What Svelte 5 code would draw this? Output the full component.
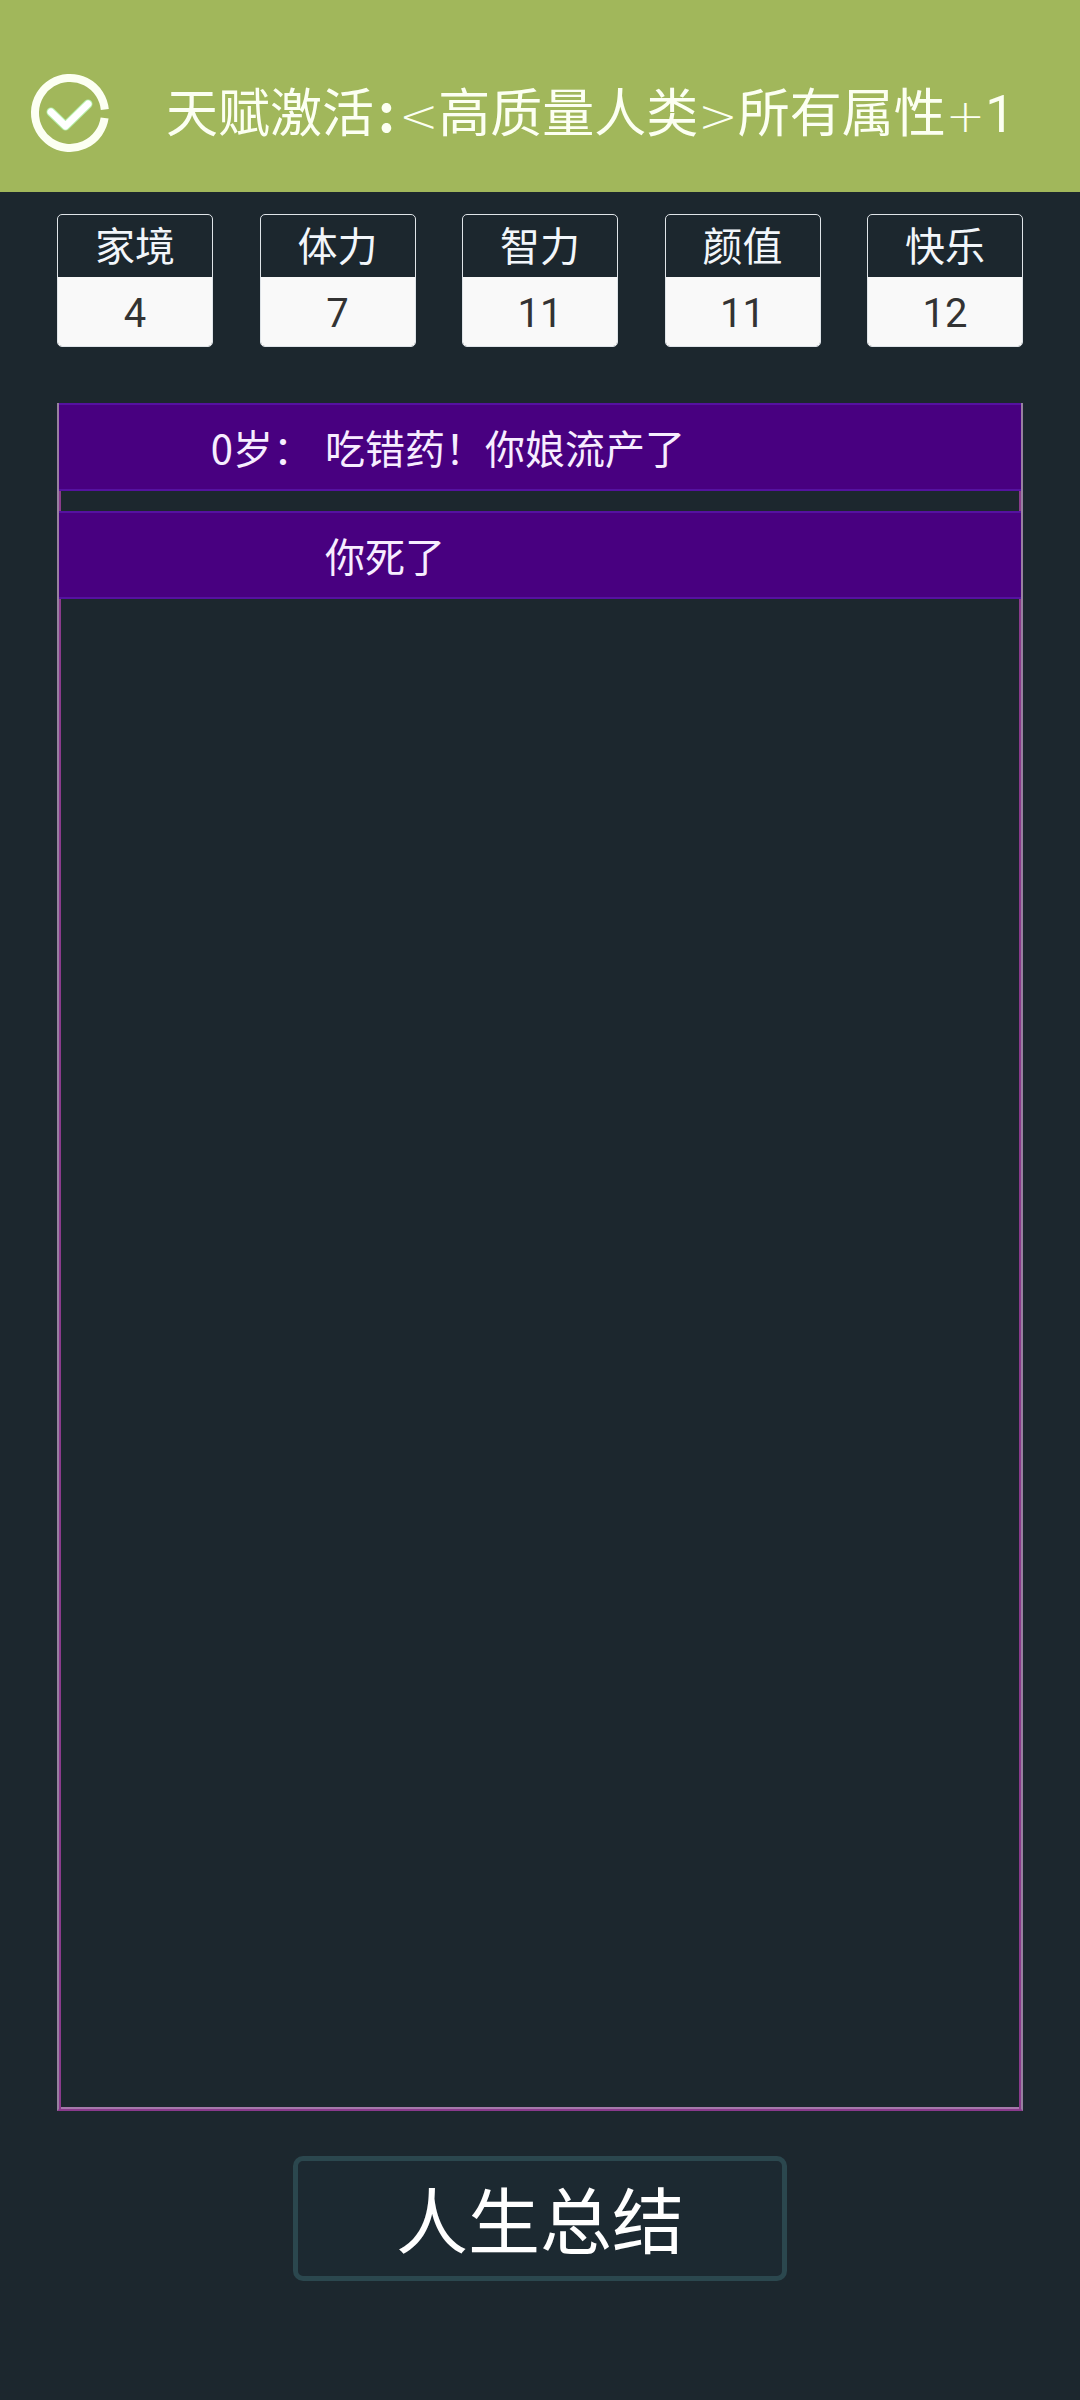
<script lang="ts">
	type Stat = { label: string; value: number };
	type LifeEvent = { age: string; text: string };

	const stats: Stat[] = [
		{ label: '家境', value: 4 },
		{ label: '体力', value: 7 },
		{ label: '智力', value: 11 },
		{ label: '颜值', value: 11 },
		{ label: '快乐', value: 12 }
	];

	const events: LifeEvent[] = [
		{ age: '0岁：', text: '吃错药！你娘流产了' },
		{ age: '', text: '你死了' }
	];
</script>

<div class="page">
	<header class="banner" role="status">
		<svg class="banner-icon" viewBox="0 0 80 80" aria-hidden="true">
			<path class="ring" d="M74.8 36.5 A35 35 0 1 0 74.6 45" />
			<path class="tick glow" d="M21 39 L35.5 53 L58 31" />
			<path class="tick" d="M21 39 L35.5 53 L58 31" />
		</svg>
		<p class="banner-text">
			天赋激活<span class="colon">:</span><span class="sign">&lt;</span>高质量人类<span class="sign">&gt;</span>所有属性<span class="sign">+</span><span class="digit">1</span>
		</p>
	</header>

	<main class="content">
		<dl class="stats">
			{#each stats as stat}
				<div class="stat">
					<dt>{stat.label}</dt>
					<dd>{stat.value}</dd>
				</div>
			{/each}
		</dl>

		<ul class="life">
			{#each events as event}
				<li class="event">
					<span class="age">{event.age}</span>
					<span class="text">{event.text}</span>
				</li>
			{/each}
		</ul>

		<button type="button" class="summary">人生总结</button>
	</main>
</div>

<style>
	:global(body) {
		background: #1c272e;
	}

	.page {
		display: flex;
		flex-direction: column;
		min-height: 100vh;
		font-family: 'Noto Sans CJK SC', sans-serif;
		color: #fff;
		background: #1c272e;
	}

	.banner {
		display: flex;
		align-items: center;
		gap: 56px;
		box-sizing: border-box;
		min-height: 192px;
		padding: 34px 30px 0;
		background: #a1b75b;
	}

	.banner-icon {
		flex: none;
		width: 80px;
		height: 80px;
		fill: none;
	}

	.ring {
		stroke: #fcfff2;
		stroke-width: 8;
	}

	.tick {
		stroke: #fff;
		stroke-width: 7;
		stroke-linecap: round;
		stroke-linejoin: round;
	}

	.tick.glow {
		stroke: #b4f0a8;
		stroke-width: 9;
	}

	.banner-text {
		margin: 0;
		font-size: 52px;
		line-height: 72px;
		color: #fcfff2;
	}

	.colon {
		padding: 0 4px;
		font-weight: 700;
	}

	.sign {
		font-family: 'DejaVu Sans', sans-serif;
		font-weight: 200;
		font-size: 47px;
	}

	.digit {
		font-family: Roboto, sans-serif;
	}

	.content {
		flex: 1;
		display: flex;
		flex-direction: column;
		padding: 22px 57px 119px;
	}

	.stats {
		display: flex;
		justify-content: space-between;
		margin: 0 0 56px;
		text-align: center;
		font-size: 40px;
	}

	.stat {
		box-sizing: border-box;
		width: 156px;
		border: 1px solid #dfe4e8;
		border-radius: 5px;
		overflow: hidden;
	}

	.stat dt {
		padding-bottom: 4px;
		line-height: 58px;
		color: #f2f6fa;
	}

	.stat dd {
		margin: 0;
		padding-top: 4px;
		font-family: Roboto, sans-serif;
		line-height: 65px;
		color: #333;
		background: #f9f9f9;
	}

	.life {
		flex: 1;
		display: flex;
		flex-direction: column;
		gap: 20px;
		margin: 0 0 45px;
		padding: 0;
		list-style: none;
		border: solid #97809f;
		border-width: 0 2px;
		border-bottom: 2px solid #8a3a8c;
		box-shadow:
			inset 2px 0 #8a3a8c,
			inset -2px 0 #8a3a8c,
			inset 0 -2px #a579ab;
	}

	.event {
		display: flex;
		gap: 12px;
		border: solid #5512a0;
		border-width: 2px 0;
		font-size: 40px;
		line-height: 84px;
		color: #f7edff;
		background: #480080;
	}

	.age {
		width: 254px;
		text-align: right;
	}

	.summary {
		align-self: center;
		width: 494px;
		height: 125px;
		padding: 0 0 4px;
		border: 5px solid #2b474e;
		border-radius: 10px;
		font: inherit;
		font-size: 72px;
		line-height: 100px;
		color: #fff;
		background: #1c2931;
		cursor: pointer;
	}
</style>
